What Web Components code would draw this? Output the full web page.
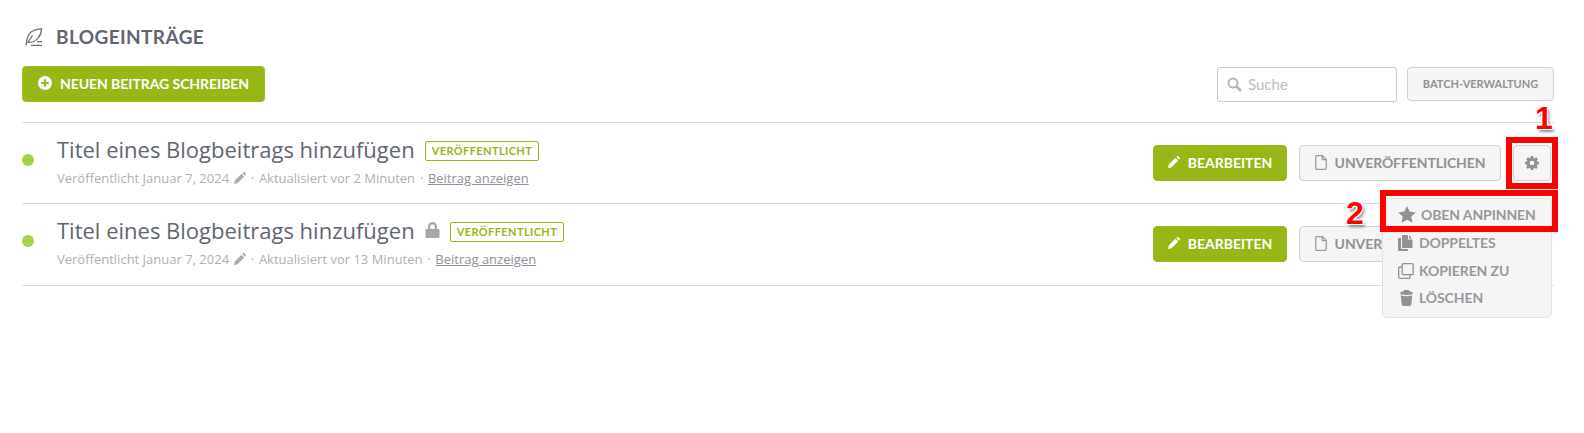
<!DOCTYPE html>
<html lang="de">
<head>
<meta charset="utf-8">
<title>Blogeinträge</title>
<style>
  html, body { margin: 0; padding: 0; background: #fff; }
  body { height: 433px; overflow: hidden; font-family: "Open Sans", sans-serif; }
</style>
</head>
<body>
<blog-page></blog-page>

<script>
const ICONS = {
  feather: '<svg width="18" height="18" viewBox="0 0 18 18" fill="none" stroke="#6b717b" stroke-width="1.300"><path d="M1 17.300C1.500 13 2 7 6 4 9 1.800 13 1 16.500 .8 16.500 4 15.500 7 13.500 9.500 11.500 12.500 8 14.500 3.500 14.300"/><path d="M7.500 7.500L2.500 15M6 17.300H17M12 13.700H17" /></svg>',
  plus: '<svg width="14" height="14" viewBox="0 0 14 14"><circle cx="7" cy="7" r="7" fill="#fff"/><path d="M7 3.200V10.800M3.200 7H10.800" stroke="#96b716" stroke-width="2.200"/></svg>',
  search: '<svg width="15" height="15" viewBox="0 0 15 15" fill="none" stroke="#b5b7ba" stroke-width="2"><circle cx="6" cy="6" r="4.500"/><path d="M9.500 9.500L14 14" stroke-width="2.500"/></svg>',
  pencil: '<svg width="12" height="12" viewBox="0 0 12 12" fill="currentColor"><path d="M0 12L.8 8.500 7.500 1.800 10.200 4.500 3.500 11.200ZM8.300 1L9 .3C9.400-.1 10-.1 10.400.3L11.700 1.600C12.100 2 12.100 2.600 11.700 3L11 3.700Z"/></svg>',
  file: '<svg width="12" height="15" viewBox="0 0 12 15" fill="none" stroke="#9a9ca0" stroke-width="1.300"><path d="M1.700.7H7.500L11.300 4.500V13C11.300 13.800 10.800 14.300 10 14.300H2C1.200 14.300.7 13.800.7 13V1.700C.7 1.100 1.100.7 1.700.7Z"/><path d="M7.300 1V4.700H11"/></svg>',
  gear: '<svg width="14" height="14" viewBox="0 0 14 14"><path fill="#8f9194" fill-rule="evenodd" d="M5.800 0H8.200L8.600 1.900 9.700 2.400 11.300 1.300 12.900 3 11.800 4.500 12.300 5.600 14 6V8.300L12.200 8.700 11.700 9.800 12.800 11.300 11.200 13 9.600 11.900 8.500 12.400 8.200 14H5.800L5.400 12.300 4.300 11.800 2.800 12.900 1.100 11.200 2.200 9.700 1.700 8.600 0 8.200V5.900L1.800 5.500 2.300 4.400 1.200 2.900 2.900 1.200 4.400 2.300 5.500 1.800ZM7 4.700A2.300 2.300 0 1 0 7 9.300 2.300 2.300 0 1 0 7 4.700Z"/></svg>',
  lock: '<svg width="15" height="16" viewBox="0 0 15 16"><path fill="#a4a7ac" d="M3 7V4.700C3 2 5 0 7.500 0S12 2 12 4.700V7H13C14 7 14.500 7.500 14.500 8.500V14.500C14.500 15.500 14 16 13 16H2C1 16 .5 15.500 .5 14.500V8.500C.5 7.500 1 7 2 7ZM5.200 7H9.800V4.700C9.800 3.200 8.800 2.200 7.500 2.200S5.200 3.200 5.200 4.700Z"/></svg>',
  star: '<svg width="18" height="17" viewBox="0 0 18 17"><path fill="#909297" d="M9 0L11.700 5.600 17.800 6.400 13.300 10.600 14.500 16.700 9 13.700 3.500 16.700 4.700 10.600 .2 6.400 6.300 5.600Z"/></svg>',
  copy: '<svg width="16" height="16" viewBox="0 0 16 16"><path fill="#909297" d="M5 0H10V4.500H14.500V13H5C4.400 13 4 12.600 4 12V1C4 .4 4.400 0 5 0ZM11 .2L14.300 3.500H11ZM0 4C0 3.400.4 3 1 3H3V13C3 13.600 3.400 14 4 14H10V15C10 15.600 9.600 16 9 16H1C.4 16 0 15.600 0 15Z"/></svg>',
  clone: '<svg width="16" height="16" viewBox="0 0 16 16" fill="none" stroke="#909297" stroke-width="1.300"><rect x="4.200" y=".7" width="11" height="11" rx="1"/><path d="M4.200 4H1.700C1.100 4 .7 4.400 .7 5V14.300C.7 14.900 1.100 15.300 1.700 15.300H11C11.600 15.300 12 14.900 12 14.300V11.700"/></svg>',
  trash: '<svg width="16" height="16" viewBox="-2 0 16 16"><path fill="#909297" d="M4.500 0H8.500C9 0 9.300.3 9.300.8V1.300C11.500 1.700 13 2.500 13 3.300 13 4.300 10 5 6.500 5S0 4.300 0 3.300C0 2.500 1.500 1.700 3.700 1.300V.8C3.700 .3 4 0 4.500 0ZM.8 5.300C2.500 6 4.500 6.300 6.500 6.300S10.500 6 12.200 5.300L11.400 14C11.300 15.300 10.500 16 9.300 16H3.700C2.500 16 1.700 15.300 1.600 14Z"/></svg>'
};

class UiButton extends HTMLElement {
  constructor() {
    super();
    const root = this.attachShadow({ mode: 'open' });
    const icon = ICONS[this.getAttribute('icon')] || '';
    root.innerHTML = `<style>
      :host {
        display: inline-flex; align-items: center; justify-content: center; gap: var(--gap, 8px);
        box-sizing: border-box; height: 36px; padding: 0 15px 2px; border-radius: 4px;
        font: 700 14px "Lato", sans-serif; white-space: nowrap;
        background: #f5f5f5; color: #8f9194; border: 1px solid #d0d0d0;
      }
      :host([primary]) { background: #96b716; color: #fff; border: 1px solid #9cbc20; }
      svg { display: block; flex: none; }
    </style>${icon}<slot></slot>`;
  }
}
customElements.define('ui-button', UiButton);

class SearchBox extends HTMLElement {
  constructor() {
    super();
    this.attachShadow({ mode: 'open' }).innerHTML = `<style>
      :host {
        display: flex; align-items: center; gap: 6px; box-sizing: border-box;
        width: 180px; height: 35px; padding: 0 9px; background: #fff;
        border: 1px solid #c9cacd; border-radius: 3px;
        font: 400 15px "Lato", sans-serif; color: #b9bbbe;
      }
    </style>${ICONS.search}<span>Suche</span>`;
  }
}
customElements.define('search-box', SearchBox);

class PostRow extends HTMLElement {
  constructor() {
    super();
    const locked = this.hasAttribute('locked');
    this.attachShadow({ mode: 'open' }).innerHTML = `<style>
      :host {
        display: flex; align-items: center; box-sizing: border-box; height: 81px;
        border-top: 1px solid #dcdcdc;
      }
      .dot { width: 12px; height: 12px; border-radius: 50%; background: #a9d145; margin: 0 23px 6px 0; flex: none; }
      .body { flex: 1; min-width: 0; margin-bottom: 5px; }
      .head { display: flex; align-items: center; height: 30px; }
      .title { font: 400 22px/30px "Open Sans", sans-serif; color: #5f6670; }
      .lock { margin-left: 10px; display: block; }
      .badge {
        box-sizing: border-box; height: 20px; margin: 3px 0 0 10px; padding: 0 6px; border: 1px solid #96b716;
        border-radius: 2px; font: 700 11px/18px "Lato", sans-serif; letter-spacing: .4px; color: #96b716;
      }
      .meta { display: flex; align-items: center; margin-top: 5px; font: 400 13px/18px "Open Sans", sans-serif; color: #aeb1b6; }
      .meta svg { margin-left: 5px; color: #a9acb1; }
      .sep { margin: 0 4.700px; }
      a { color: #8f939a; text-decoration: underline; }
      .actions { display: flex; gap: 12px; margin-right: 3px; }
    </style>
    <span class="dot"></span>
    <div class="body">
      <div class="head">
        <span class="title">Titel eines Blogbeitrags hinzufügen</span>
        ${locked ? ICONS.lock.replace('<svg', '<svg class="lock"') : ''}
        <span class="badge">VERÖFFENTLICHT</span>
      </div>
      <div class="meta">
        <span>Veröffentlicht Januar 7, 2024</span>${ICONS.pencil}
        <span class="sep">·</span>
        <span>Aktualisiert vor ${this.getAttribute('updated')}</span>
        <span class="sep">·</span>
        <a>Beitrag anzeigen</a>
      </div>
    </div>
    <div class="actions">
      <ui-button primary icon="pencil" style="width:134px">BEARBEITEN</ui-button>
      <ui-button icon="file" style="width:202px;letter-spacing:-.1px">UNVERÖFFENTLICHEN</ui-button>
      <ui-button icon="gear" style="width:38px;padding:0"></ui-button>
    </div>`;
  }
}
customElements.define('post-row', PostRow);

class MenuItem extends HTMLElement {
  constructor() {
    super();
    this.attachShadow({ mode: 'open' }).innerHTML = `<style>
      :host {
        display: flex; align-items: center; gap: 5px; height: 27px; padding-left: 15px;
        font: 700 14px "Lato", sans-serif; color: #96989c; white-space: nowrap; letter-spacing: -.1px;
      }
      svg { flex: none; display: block; }
    </style>${ICONS[this.getAttribute('icon')]}<slot></slot>`;
  }
}
customElements.define('menu-item', MenuItem);

class GearMenu extends HTMLElement {
  constructor() {
    super();
    this.attachShadow({ mode: 'open' }).innerHTML = `<style>
      :host {
        position: absolute; left: 1382px; top: 198px; width: 170px; height: 120px; box-sizing: border-box;
        background: #f5f5f5; border: 1px solid #e2e2e2; border-radius: 5px;
      }
    </style><slot></slot>`;
  }
}
customElements.define('gear-menu', GearMenu);

class CalloutMark extends HTMLElement {
  constructor() {
    super();
    this.attachShadow({ mode: 'open' }).innerHTML = `<style>
      :host { position: absolute; box-sizing: border-box; border: 6px solid #f00; pointer-events: none; }
      :host([num]) {
        border: 0; font: 700 32px/32px "Liberation Sans", sans-serif; color: #f00;
        text-shadow: -1px -1px 0 #fff, 1px -1px 0 #fff, -1px 1px 0 #fff, 1px 1px 0 #fff, 2px 3px 3px #888;
      }
    </style><slot></slot>`;
  }
}
customElements.define('callout-mark', CalloutMark);

class BlogPage extends HTMLElement {
  constructor() {
    super();
    this.attachShadow({ mode: 'open' }).innerHTML = `<style>
      :host { display: block; position: relative; box-sizing: border-box; width: 1584px; height: 433px; padding: 27px 30px 0 22px; }
      .heading { display: flex; align-items: center; gap: 13px; height: 20px; padding-left: 3px; font: 700 19px/20px "Lato", sans-serif; color: #5f6670; letter-spacing: .4px; }
      .toolbar { display: flex; align-items: center; justify-content: space-between; margin-top: 19px; height: 36px; margin-bottom: 20px; }
      .tools { display: flex; gap: 10px; align-items: center; }
      .list { border-bottom: 1px solid #dcdcdc; padding-bottom: 1px; }
    </style>
    <div class="heading">${ICONS.feather}<span>BLOGEINTRÄGE</span></div>
    <div class="toolbar">
      <ui-button primary icon="plus" style="width:243px;letter-spacing:-.05px">NEUEN BEITRAG SCHREIBEN</ui-button>
      <div class="tools">
        <search-box></search-box>
        <ui-button style="width:147px;height:34px;font-size:11px">BATCH-VERWALTUNG</ui-button>
      </div>
    </div>
    <div class="list">
      <post-row updated="2 Minuten"></post-row>
      <post-row locked updated="13 Minuten"></post-row>
    </div>
    <gear-menu>
      <menu-item icon="star" style="height:30px">OBEN ANPINNEN</menu-item>
      <menu-item icon="copy">DOPPELTES</menu-item>
      <menu-item icon="clone" style="margin-top:1px">KOPIEREN ZU</menu-item>
      <menu-item icon="trash">LÖSCHEN</menu-item>
    </gear-menu>
    <callout-mark style="left:1506px;top:137px;width:52px;height:52px"></callout-mark>
    <callout-mark style="left:1380px;top:190px;width:178px;height:42px"></callout-mark>
    <callout-mark num style="left:1535px;top:102px">1</callout-mark>
    <callout-mark num style="left:1346px;top:197px">2</callout-mark>`;
  }
}
customElements.define('blog-page', BlogPage);
</script>
</body>
</html>
